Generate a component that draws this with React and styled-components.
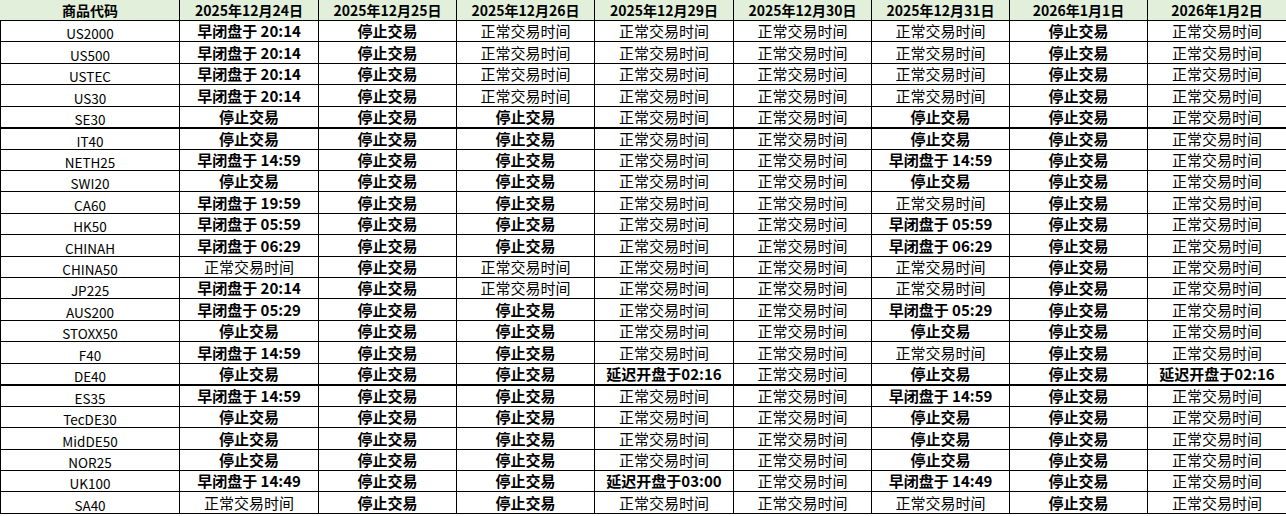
import React from "react";
import styled, { createGlobalStyle } from "styled-components";

const Global = createGlobalStyle`
  html, body { margin: 0; padding: 0; background: #ffffff; }
  body { font-family: "Noto Sans CJK SC", "Noto Sans", sans-serif; color: #000; }
`;

const Table = styled.table`
  border-collapse: collapse;
  table-layout: fixed;
  width: 1286px;
`;

const HeadCell = styled.th`
  background: #e2efda;
  font-size: 14px;
  font-weight: 700;
  height: 20px;
  padding: 0;
  line-height: 20px;
  text-align: center;
  border-left: 1px solid #000;
  border-right: 1px solid #000;
  border-bottom: 1px solid #000;
  white-space: nowrap;
  overflow: hidden;
  &:first-child { border-left-color: #e2efda; }
`;

const Row = styled.tr`
  height: 21.42px;
  border-bottom: ${(p) => (p.$thick ? "2px" : "1px")} solid #000;
`;

const CodeCell = styled.td`
  font-size: 13.5px;
  text-align: center;
  vertical-align: bottom;
  padding: 0;
  line-height: 16px;
  border-left: 1px solid #000;
  border-right: 1px solid #000;
  white-space: nowrap;
`;

const StatusCell = styled.td`
  font-size: 15px;
  font-weight: ${(p) => (p.$bold ? 700 : 400)};
  text-align: center;
  vertical-align: bottom;
  padding: 0;
  line-height: 20px;
  border-left: 1px solid #000;
  border-right: 1px solid #000;
  white-space: nowrap;
  overflow: hidden;
`;

const headers = [
  "商品代码",
  "2025年12月24日",
  "2025年12月25日",
  "2025年12月26日",
  "2025年12月29日",
  "2025年12月30日",
  "2025年12月31日",
  "2026年1月1日",
  "2026年1月2日",
];

const N = { t: "正常交易时间", b: false };
const S = { t: "停止交易", b: true };
const E = (x) => ({ t: `早闭盘于 ${x}`, b: true });
const D = (x) => ({ t: `延迟开盘于${x}`, b: true });

const rows = [
  ["US2000", [E("20:14"), S, N, N, N, N, S, N]],
  ["US500", [E("20:14"), S, N, N, N, N, S, N]],
  ["USTEC", [E("20:14"), S, N, N, N, N, S, N]],
  ["US30", [E("20:14"), S, N, N, N, N, S, N]],
  ["SE30", [S, S, S, N, N, S, S, N], true],
  ["IT40", [S, S, S, N, N, S, S, N]],
  ["NETH25", [E("14:59"), S, S, N, N, E("14:59"), S, N]],
  ["SWI20", [S, S, S, N, N, S, S, N]],
  ["CA60", [E("19:59"), S, S, N, N, N, S, N]],
  ["HK50", [E("05:59"), S, S, N, N, E("05:59"), S, N]],
  ["CHINAH", [E("06:29"), S, S, N, N, E("06:29"), S, N]],
  ["CHINA50", [N, S, N, N, N, N, S, N]],
  ["JP225", [E("20:14"), S, N, N, N, N, S, N]],
  ["AUS200", [E("05:29"), S, S, N, N, E("05:29"), S, N]],
  ["STOXX50", [S, S, S, N, N, S, S, N]],
  ["F40", [E("14:59"), S, S, N, N, N, S, N]],
  ["DE40", [S, S, S, D("02:16"), N, S, S, D("02:16")], true],
  ["ES35", [E("14:59"), S, S, N, N, E("14:59"), S, N]],
  ["TecDE30", [S, S, S, N, N, S, S, N]],
  ["MidDE50", [S, S, S, N, N, S, S, N]],
  ["NOR25", [S, S, S, N, N, S, S, N]],
  ["UK100", [E("14:49"), S, S, D("03:00"), N, E("14:49"), S, N]],
  ["SA40", [N, S, S, N, N, N, S, N]],
];

const widths = [179, 139, 138, 138, 139, 138, 138, 138, 139];

export default function App() {
  return (
    <>
      <Global />
      <Table>
        <colgroup>
          {widths.map((w, i) => (
            <col key={i} style={{ width: w }} />
          ))}
        </colgroup>
        <thead>
          <tr>
            {headers.map((h) => (
              <HeadCell key={h}>{h}</HeadCell>
            ))}
          </tr>
        </thead>
        <tbody>
          {rows.map(([code, cells, thick]) => (
            <Row key={code} $thick={thick}>
              <CodeCell>{code}</CodeCell>
              {cells.map((c, i) => (
                <StatusCell key={i} $bold={c.b}>
                  {c.t}
                </StatusCell>
              ))}
            </Row>
          ))}
        </tbody>
      </Table>
    </>
  );
}
